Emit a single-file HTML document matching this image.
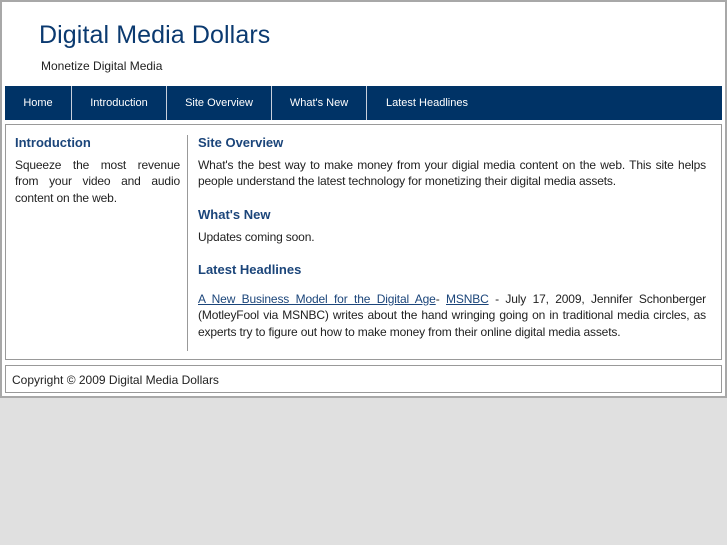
<!DOCTYPE html>
<html><head><style>
body{margin:0;width:727px;height:545px;background:#e0e0e0;font-family:"Liberation Sans",Arial,sans-serif;font-size:12px;color:#222;position:relative;overflow:hidden}
.wrap{position:absolute;left:0;top:0;width:723px;height:394px;border:2px solid #a8a8a8;background:#fff}
.abs{position:absolute}
h1{position:absolute;left:37px;top:19px;margin:0;font-size:25px;font-weight:normal;color:#0b3a70;letter-spacing:0.1px}
.sub{left:39px;top:57px;font-size:12px;color:#222}
.nav{left:3px;top:84px;width:717px;height:34px;background:#003366}
.nav div{position:absolute;top:0;height:34px;line-height:34px;color:#fff;font-size:11px;text-align:center;border-right:1px solid #c8d0dc}
.box{left:3px;top:122px;width:715px;height:234px;border:1px solid #999;background:#fff}
.foot{left:3px;top:363px;width:715px;height:26px;border:1px solid #999;background:#fff;line-height:28px}
h2{position:absolute;margin:0;font-size:13px;font-weight:bold;color:#1b457a}
p{position:absolute;margin:0;line-height:16.3px;text-align:justify;letter-spacing:-0.15px}
a{color:#1b457a;text-decoration:underline}
</style></head><body>
<div class="wrap">
<h1>Digital Media Dollars</h1>
<div class="abs sub">Monetize Digital Media</div>
<div class="abs nav">
<div style="left:0;width:66px">Home</div>
<div style="left:67px;width:94px">Introduction</div>
<div style="left:162px;width:104px">Site Overview</div>
<div style="left:267px;width:94px">What's New</div>
<div style="left:362px;width:120px;border:none">Latest Headlines</div>
</div>
<div class="abs box">
<h2 style="left:9px;top:10px">Introduction</h2>
<p style="left:9px;top:32px;width:165px">Squeeze the most revenue from your video and audio content on the web.</p>
<div class="abs" style="left:181px;top:10px;width:1px;height:216px;background:#999"></div>
<h2 style="left:192px;top:10px">Site Overview</h2>
<p style="left:192px;top:32px;width:508px">What's the best way to make money from your digial media content on the web. This site helps people understand the latest technology for monetizing their digital media assets.</p>
<h2 style="left:192px;top:82px">What's New</h2>
<p style="left:192px;top:104px;width:508px">Updates coming soon.</p>
<h2 style="left:192px;top:137px">Latest Headlines</h2>
<p style="left:192px;top:166px;width:508px"><a>A New Business Model for the Digital Age</a>- <a>MSNBC</a> - July 17, 2009, Jennifer Schonberger (MotleyFool via MSNBC) writes about the hand wringing going on in traditional media circles, as experts try to figure out how to make money from their online digital media assets.</p>
</div>
<div class="abs foot"><span style="margin-left:6px">Copyright © 2009 Digital Media Dollars</span></div>
</div>
</body></html>
